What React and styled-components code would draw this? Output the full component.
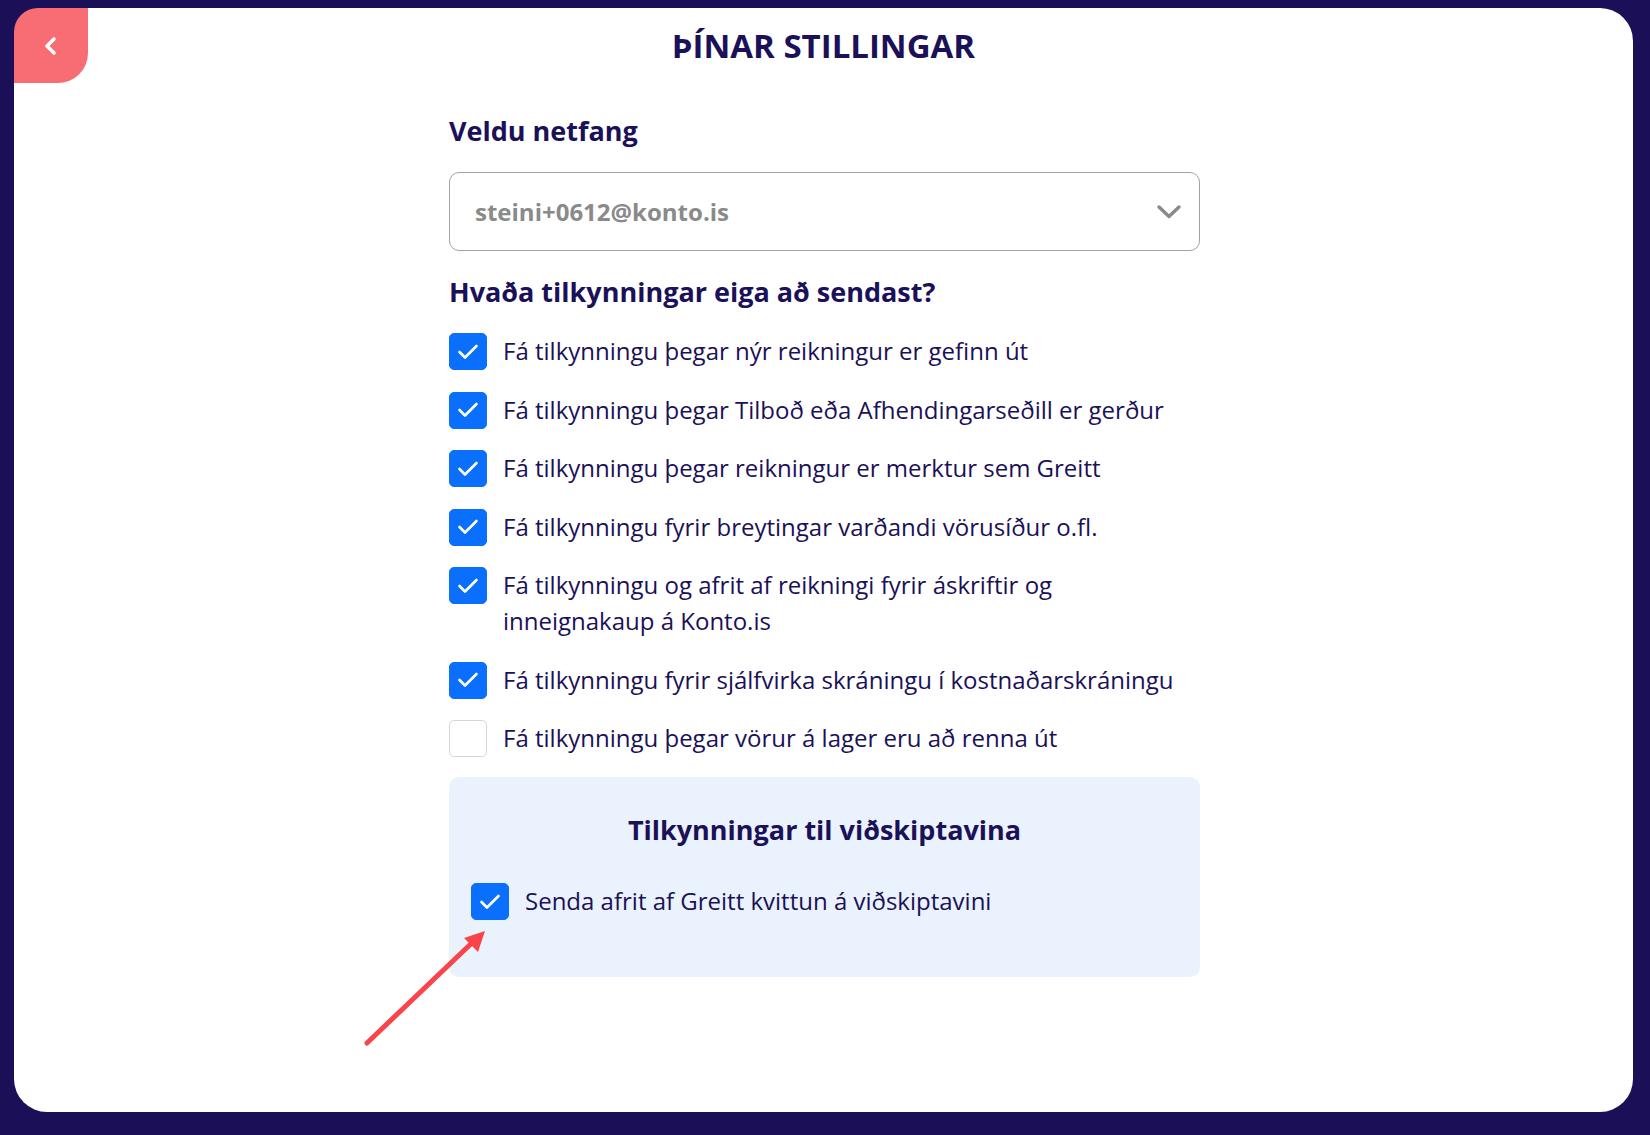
import styled, { createGlobalStyle } from "styled-components";

const GlobalStyle = createGlobalStyle`
  html, body {
    margin: 0;
    padding: 0;
    background: #1b0f57;
  }
  body {
    font-family: "Open Sans", "Noto Sans", sans-serif;
  }
`;

const Page = styled.div`
  box-sizing: border-box;
  min-height: 100vh;
  padding: 8px 17px 23px 14px;
  background: #1b0f57;
`;

const Card = styled.div`
  box-sizing: border-box;
  height: 1104px;
  background: #ffffff;
  border-radius: 33px;
  display: flex;
  flex-direction: column;
`;

const Header = styled.div`
  display: grid;
  grid-template-columns: 74px 1fr 74px;
  align-items: center;
  height: 75px;
`;

const BackButton = styled.button`
  width: 74px;
  height: 75px;
  border: none;
  padding: 0;
  background: #f86d74;
  border-radius: 24px 0 30px 0;
  display: flex;
  align-items: center;
  justify-content: center;
  cursor: pointer;
`;

const Title = styled.h1`
  margin: 0;
  text-align: center;
  font-size: 33px;
  font-weight: 700;
  line-height: 40px;
  color: #1b1158;
`;

const Content = styled.div`
  width: 751px;
  margin: 0 auto;
  padding-top: 32px;
  position: relative;
  left: 1px;
`;

const Heading = styled.h2`
  margin: 0;
  font-size: 27px;
  font-weight: 700;
  line-height: 32px;
  color: #1b1158;
`;

const SelectBox = styled.div`
  box-sizing: border-box;
  height: 79px;
  margin: 25px 0 25px;
  padding: 0 17px 0 25px;
  border: 1px solid #a3a3a3;
  border-radius: 10px;
  display: flex;
  align-items: center;
  justify-content: space-between;
  font-size: 24px;
  font-weight: 700;
  color: #8a8a8a;
`;

const OptionList = styled.div`
  display: flex;
  flex-direction: column;
  gap: 22.5px;
  margin-top: 25px;
`;

const Row = styled.label`
  display: flex;
  align-items: flex-start;
  gap: 16px;
`;

const Box = styled.span`
  box-sizing: border-box;
  flex: 0 0 38px;
  width: 38px;
  height: 37px;
  margin-bottom: -1px;
  border-radius: 5px;
  background: ${(p) => (p.checked ? "#0a6ffd" : "#ffffff")};
  border: 1px solid ${(p) => (p.checked ? "#0a6ffd" : "#d6d6d6")};
  display: flex;
  align-items: center;
  justify-content: center;
`;

const Text = styled.span`
  font-size: 24px;
  line-height: 36px;
  color: #1b1158;
`;

const CustomerPanel = styled.div`
  box-sizing: border-box;
  position: relative;
  margin-top: 21px;
  height: 200px;
  padding: 37px 22px 0;
  background: #eaf2fd;
  border-radius: 10px;
`;

const PanelTitle = styled.h3`
  margin: 0 0 37px;
  text-align: center;
  font-size: 27px;
  font-weight: 700;
  line-height: 32px;
  color: #1b1158;
`;

const Arrow = styled.svg`
  position: absolute;
  left: -90px;
  top: 145px;
  overflow: visible;
`;

const Check = () => (
  <svg width="24" height="20" viewBox="0 0 24 20">
    <polyline
      points="3.5,10 9,15.5 20.5,4"
      fill="none"
      stroke="#ffffff"
      strokeWidth="2.6"
      strokeLinecap="round"
      strokeLinejoin="round"
    />
  </svg>
);

const Checkbox = ({ checked }) => (
  <Box checked={checked}>{checked && <Check />}</Box>
);

const options = [
  { text: "Fá tilkynningu þegar nýr reikningur er gefinn út", checked: true },
  { text: "Fá tilkynningu þegar Tilboð eða Afhendingarseðill er gerður", checked: true },
  { text: "Fá tilkynningu þegar reikningur er merktur sem Greitt", checked: true },
  { text: "Fá tilkynningu fyrir breytingar varðandi vörusíður o.fl.", checked: true },
  { text: "Fá tilkynningu og afrit af reikningi fyrir áskriftir og inneignakaup á Konto.is", checked: true },
  { text: "Fá tilkynningu fyrir sjálfvirka skráningu í kostnaðarskráningu", checked: true },
  { text: "Fá tilkynningu þegar vörur á lager eru að renna út", checked: false },
];

const App = () => {
  return (
    <Page>
      <GlobalStyle />
      <Card>
        <Header>
          <BackButton aria-label="Til baka">
            <svg width="16" height="20" viewBox="0 0 16 20">
              <polyline
                points="11,3 4,10 11,17"
                fill="none"
                stroke="#ffffff"
                strokeWidth="3.6"
                strokeLinecap="round"
                strokeLinejoin="round"
              />
            </svg>
          </BackButton>
          <Title>ÞÍNAR STILLINGAR</Title>
          <div />
        </Header>
        <Content>
          <Heading>Veldu netfang</Heading>
          <SelectBox>
            <span>steini+0612@konto.is</span>
            <svg width="26" height="16" viewBox="0 0 26 16">
              <polyline
                points="3,3 13,12.5 23,3"
                fill="none"
                stroke="#8a8a8a"
                strokeWidth="3.4"
                strokeLinecap="round"
                strokeLinejoin="round"
              />
            </svg>
          </SelectBox>
          <Heading>Hvaða tilkynningar eiga að sendast?</Heading>
          <OptionList>
            {options.map((o) => (
              <Row key={o.text}>
                <Checkbox checked={o.checked} />
                <Text>{o.text}</Text>
              </Row>
            ))}
          </OptionList>
          <CustomerPanel>
            <PanelTitle>Tilkynningar til viðskiptavina</PanelTitle>
            <Row>
              <Checkbox checked />
              <Text>Senda afrit af Greitt kvittun á viðskiptavini</Text>
            </Row>
            <Arrow width="130" height="130" viewBox="0 0 130 130">
              <line
                x1="8"
                y1="121"
                x2="117"
                y2="17"
                stroke="#f94449"
                strokeWidth="5"
                strokeLinecap="round"
              />
              <polygon points="126,9 119,30 105,16" fill="#f94449" />
            </Arrow>
          </CustomerPanel>
        </Content>
      </Card>
    </Page>
  );
};

export default App;
